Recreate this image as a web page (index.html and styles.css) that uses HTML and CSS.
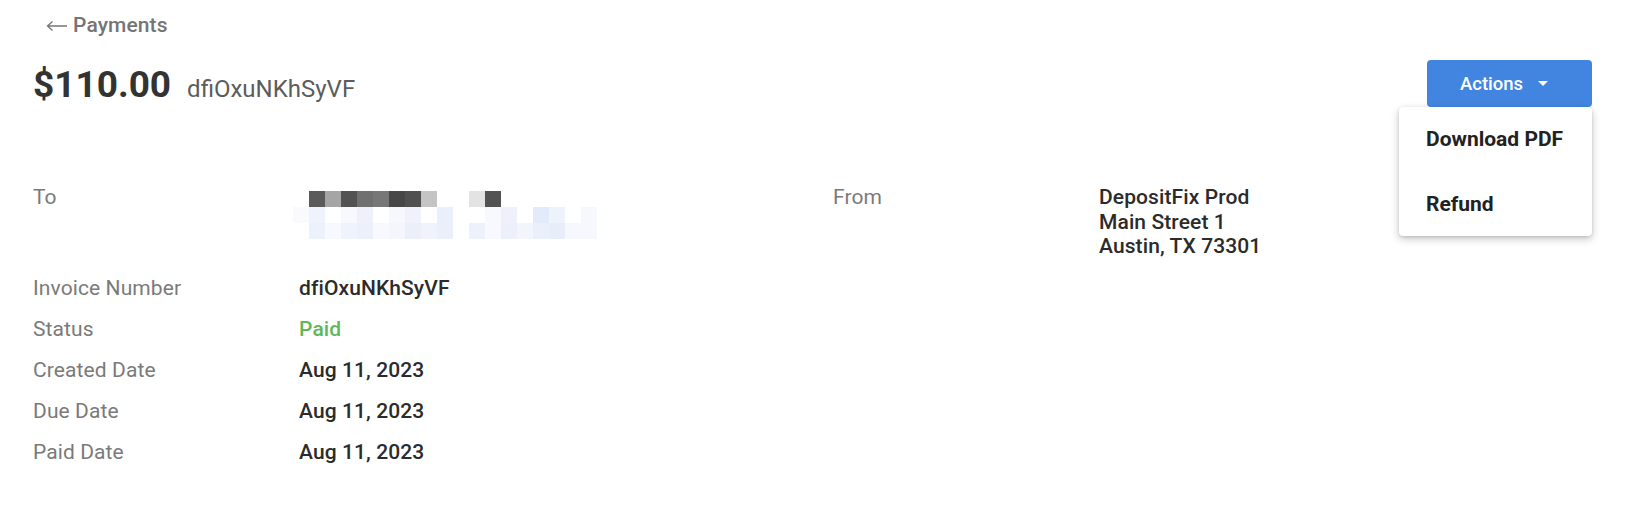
FILE: index.html
```html
<!DOCTYPE html>
<html lang="en">
<head>
<meta charset="utf-8">
<title>Payment dfiOxuNKhSyVF</title>
<link rel="stylesheet" href="styles.css">
</head>
<body>
<div class="page">
  <a class="back" href="#">
    <svg class="back-arrow" width="21" height="12" viewBox="0 0 21 12" aria-hidden="true">
      <path d="M1.5 6H21M6.5 1.5L1.5 6l5 4.5" fill="none" stroke="currentColor" stroke-width="1.3"/>
    </svg>
    <span>Payments</span>
  </a>

  <header class="head">
    <div class="title">
      <span class="amount">$110.00</span>
      <span class="ref">dfiOxuNKhSyVF</span>
    </div>
    <div class="actions">
      <button class="btn" type="button">Actions<span class="caret"></span></button>
      <ul class="menu">
        <li class="menu-item">Download PDF</li>
        <li class="menu-item">Refund</li>
      </ul>
    </div>
  </header>

  <section class="parties">
    <div class="label">To</div>
    <div class="value">
      <!-- recipient name and email, pixelated -->
      <svg class="redacted" width="304" height="48" viewBox="0 0 304 48" aria-hidden="true" shape-rendering="crispEdges">
        <rect x="16" y="0" width="16" height="16" fill="#5a5a5a"/>
        <rect x="32" y="0" width="16" height="16" fill="#a5a5a5"/>
        <rect x="48" y="0" width="16" height="16" fill="#525252"/>
        <rect x="64" y="0" width="16" height="16" fill="#707070"/>
        <rect x="80" y="0" width="16" height="16" fill="#777777"/>
        <rect x="96" y="0" width="16" height="16" fill="#474747"/>
        <rect x="112" y="0" width="16" height="16" fill="#505050"/>
        <rect x="128" y="0" width="16" height="16" fill="#c4c4c4"/>
        <rect x="176" y="0" width="16" height="16" fill="#e3e3e3"/>
        <rect x="192" y="0" width="16" height="16" fill="#525252"/>

        <rect x="0" y="16" width="16" height="16" fill="#fafafc"/>
        <rect x="16" y="16" width="16" height="16" fill="#eef3fc"/>
        <rect x="48" y="16" width="16" height="16" fill="#f7f9fe"/>
        <rect x="64" y="16" width="16" height="16" fill="#eef1fb"/>
        <rect x="96" y="16" width="16" height="16" fill="#f7f8fd"/>
        <rect x="112" y="16" width="16" height="16" fill="#eff2fb"/>
        <rect x="144" y="16" width="16" height="16" fill="#e9f0fb"/>
        <rect x="192" y="16" width="16" height="16" fill="#f7f9fe"/>
        <rect x="208" y="16" width="16" height="16" fill="#eef1fb"/>
        <rect x="240" y="16" width="16" height="16" fill="#e2ebfa"/>
        <rect x="256" y="16" width="16" height="16" fill="#eef2fb"/>
        <rect x="288" y="16" width="16" height="16" fill="#f7f8fd"/>

        <rect x="16" y="32" width="16" height="16" fill="#ecf2fb"/>
        <rect x="32" y="32" width="16" height="16" fill="#f7f9fe"/>
        <rect x="48" y="32" width="16" height="16" fill="#eef3fc"/>
        <rect x="64" y="32" width="16" height="16" fill="#ebf0fa"/>
        <rect x="80" y="32" width="16" height="16" fill="#f7f9fe"/>
        <rect x="96" y="32" width="16" height="16" fill="#f5f6fc"/>
        <rect x="112" y="32" width="16" height="16" fill="#ebeffa"/>
        <rect x="128" y="32" width="16" height="16" fill="#f0f2fc"/>
        <rect x="144" y="32" width="16" height="16" fill="#ebeffa"/>
        <rect x="176" y="32" width="16" height="16" fill="#ecf1fb"/>
        <rect x="192" y="32" width="16" height="16" fill="#f7f9fe"/>
        <rect x="208" y="32" width="16" height="16" fill="#ebf0fb"/>
        <rect x="224" y="32" width="16" height="16" fill="#f2f5fc"/>
        <rect x="240" y="32" width="16" height="16" fill="#ebeefb"/>
        <rect x="256" y="32" width="16" height="16" fill="#e8edfa"/>
        <rect x="272" y="32" width="16" height="16" fill="#f7f8fd"/>
        <rect x="288" y="32" width="16" height="16" fill="#f7f8fd"/>
      </svg>
    </div>
    <div class="label">From</div>
    <div class="value address">DepositFix Prod<br>Main Street 1<br>Austin, TX 73301</div>
  </section>

  <dl class="details">
    <dt>Invoice Number</dt><dd>dfiOxuNKhSyVF</dd>
    <dt>Status</dt><dd class="status-paid">Paid</dd>
    <dt>Created Date</dt><dd>Aug 11, 2023</dd>
    <dt>Due Date</dt><dd>Aug 11, 2023</dd>
    <dt>Paid Date</dt><dd>Aug 11, 2023</dd>
  </dl>
</div>
</body>
</html>
```

FILE: styles.css
```css
* {
  box-sizing: border-box;
}

html,
body {
  margin: 0;
  background: #ffffff;
}

body {
  font-family: Roboto, "Noto Sans", "Liberation Sans", sans-serif;
  color: #2b2b2b;
}

.page {
  padding: 13px 36px 0 33px;
}

/* back link */
.back {
  display: flex;
  align-items: center;
  gap: 6px;
  width: fit-content;
  margin-left: 13px;
  font-size: 21px;
  font-weight: 500;
  letter-spacing: 0.1px;
  line-height: normal;
  color: #757575;
  text-decoration: none;
}

.back-arrow {
  display: block;
  margin-top: 2px;
}

/* title row */
.head {
  display: flex;
  align-items: flex-start;
  justify-content: space-between;
  margin-top: 23px;
}

.title {
  display: flex;
  align-items: baseline;
  gap: 16px;
  margin-top: 4px;
}

.amount {
  font-size: 37px;
  font-weight: 700;
  line-height: 42px;
  color: #333333;
}

.ref {
  font-size: 24px;
  font-weight: 400;
  color: #5c5c5c;
}

.actions {
  position: relative;
}

.btn {
  display: flex;
  align-items: center;
  width: 165px;
  height: 47px;
  padding: 0 0 0 33px;
  border: 0;
  border-radius: 4px;
  background: #4285e1;
  color: #ffffff;
  font-family: inherit;
  font-size: 18.5px;
  font-weight: 500;
  cursor: pointer;
}

.caret {
  width: 0;
  height: 0;
  margin-left: 15px;
  border-left: 5.5px solid transparent;
  border-right: 5.5px solid transparent;
  border-top: 5px solid #ffffff;
}

.menu {
  position: absolute;
  top: 100%;
  right: 0;
  width: 193px;
  margin: 0;
  padding: 0;
  list-style: none;
  background: #ffffff;
  border-radius: 4px;
  box-shadow: 0 3px 9px rgba(0, 0, 0, 0.22), 0 1px 3px rgba(0, 0, 0, 0.12);
  z-index: 2;
}

.menu-item {
  display: flex;
  align-items: center;
  height: 64.5px;
  padding-left: 27px;
  font-size: 21px;
  font-weight: 700;
  color: #222222;
}

/* recipient / sender */
.parties {
  display: grid;
  grid-template-columns: 266px 534px 266px 1fr;
  align-items: start;
  margin-top: 78px;
  font-size: 21px;
  letter-spacing: 0.1px;
  line-height: 24.5px;
}

.label {
  color: #7a7a7a;
}

.value {
  font-weight: 500;
  color: #2b2b2b;
}

.redacted {
  display: block;
  margin: 6px 0 0 -6px;
}

/* invoice facts */
.details {
  display: grid;
  grid-template-columns: 266px auto;
  justify-content: start;
  row-gap: 17px;
  margin: 17px 0 0;
  font-size: 21px;
  letter-spacing: 0.1px;
  line-height: 24px;
}

.details dt {
  color: #7a7a7a;
}

.details dd {
  margin: 0;
  font-weight: 500;
  color: #2b2b2b;
}

.details .status-paid {
  color: #5cb85a;
}
```
